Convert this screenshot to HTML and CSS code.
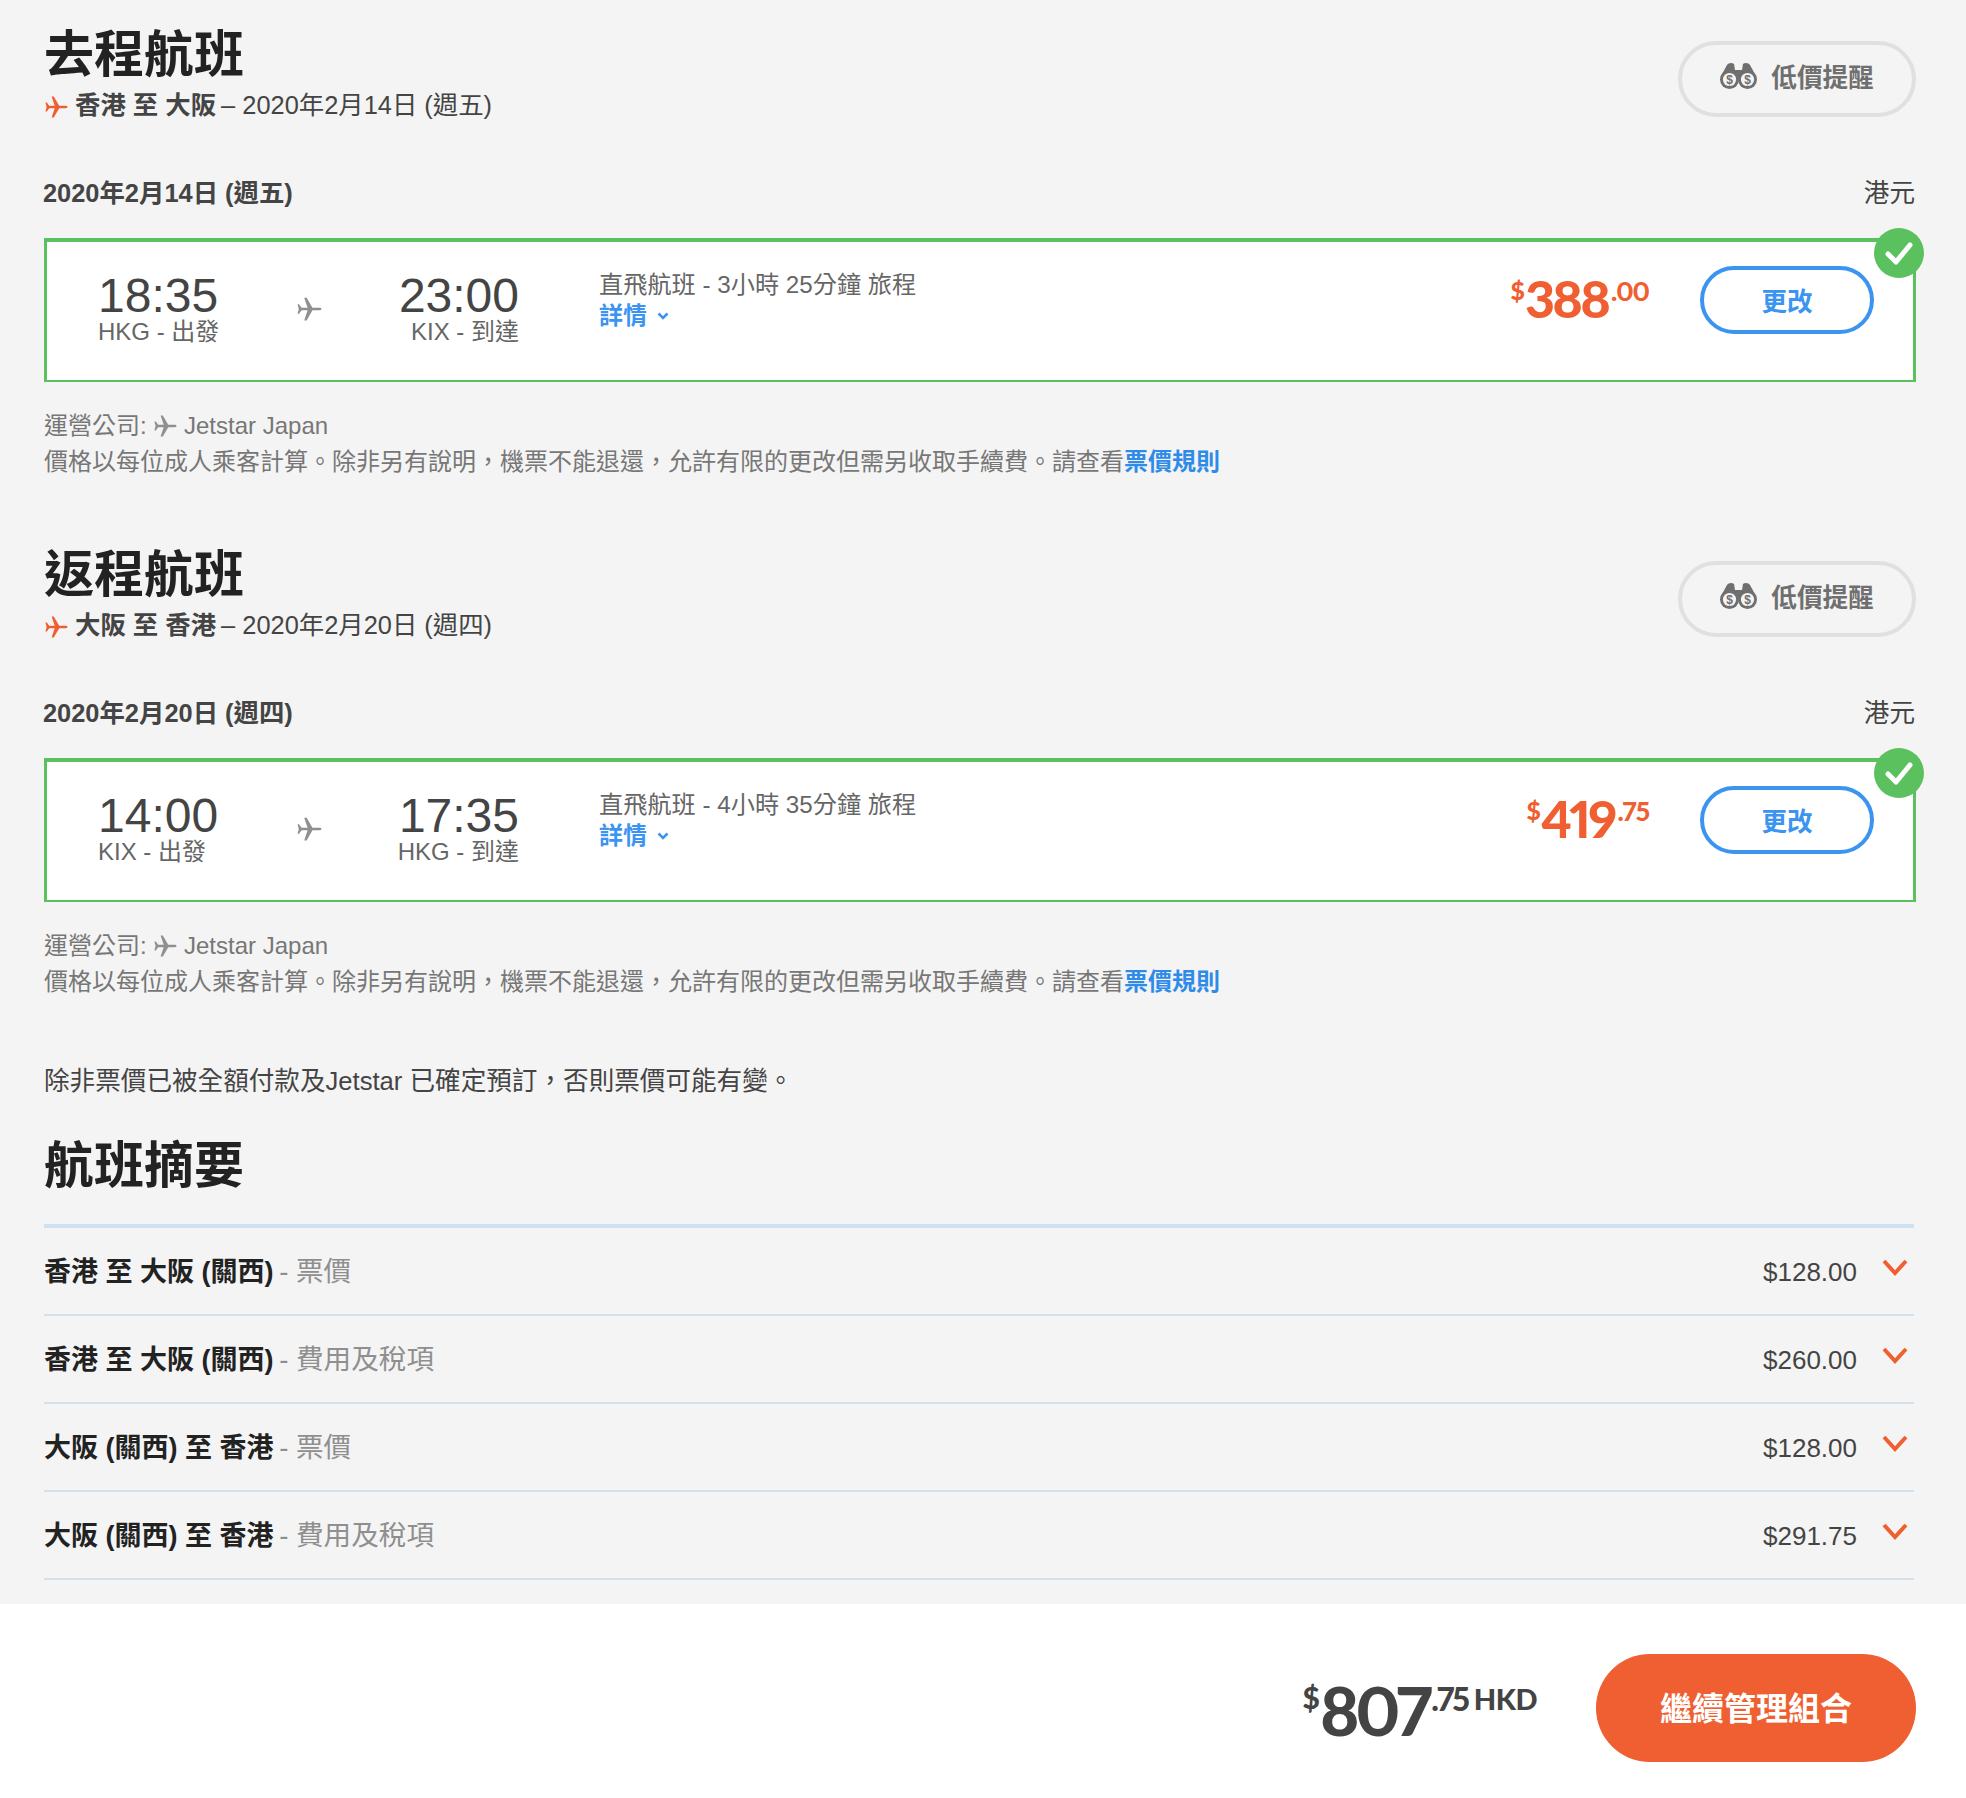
FILE: index.html
```html
<!DOCTYPE html>
<html lang="zh-Hant">
<head>
<meta charset="utf-8">
<title>航班摘要</title>
<link rel="stylesheet" href="styles.css">
</head>
<body>
<svg class="defs" width="0" height="0" aria-hidden="true">
  <symbol id="plane" viewBox="0 0 24 24"><path d="M23.5 12c0-.8-1-1.2-2-1.2h-6.3L9.8 1.5H7.6l3.1 9.3H5.2L2.8 7.6H1.4L2.6 12l-1.2 4.4h1.4l2.4-3.2h5.5L7.6 22.5h2.2l5.4-9.3h6.3c1 0 2-.4 2-1.2z"/></symbol>
  <symbol id="binoculars" viewBox="0 0 37 27">
    <path d="M1 14 7 3c1-2 5-3 7-1l1 6h7l1-6c2-2 6-1 7 1l6 11-8 4H9z"/>
    <circle cx="9.5" cy="17.5" r="9.5"/><circle cx="27.5" cy="17.5" r="9.5"/>
    <circle class="lens" cx="9.5" cy="17.5" r="6.6"/><circle class="lens" cx="27.5" cy="17.5" r="6.6"/>
  </symbol>
</svg>
<main class="page">
  <section class="leg">
    <header class="leg-head">
      <div>
        <h1 class="title">去程航班</h1>
        <p class="route"><svg class="plane plane-orange"><use href="#plane"/></svg><b>香港 至 大阪</b> – 2020年2月14日 (週五)</p>
      </div>
      <button class="alert"><svg class="binoculars" viewBox="0 0 37 27"><use href="#binoculars"/><text class="lens-sign" x="9.5" y="21.5">$</text><text class="lens-sign" x="27.5" y="21.5">$</text></svg>低價提醒</button>
    </header>
    <div class="date-row"><b>2020年2月14日 (週五)</b><span>港元</span></div>
    <article class="card">
      <div class="time time-dep"><div class="clock">18:35</div><div class="place">HKG - 出發</div></div>
      <div class="hop"><svg class="plane plane-grey"><use href="#plane"/></svg></div>
      <div class="time time-arr"><div class="clock">23:00</div><div class="place">KIX - 到達</div></div>
      <div class="info"><div>直飛航班 - 3小時 25分鐘 旅程</div><div class="details">詳情<svg class="mini-chev" viewBox="0 0 12 8"><path d="M1.5 1.5 6 6l4.5-4.5"/></svg></div></div>
      <div class="price"><span class="cur">$</span><span class="int">388</span><span class="dec">.00</span></div>
      <button class="change">更改</button>
      <span class="check"><svg viewBox="0 0 50 50"><path d="M14 26l8 8 14-17"/></svg></span>
    </article>
    <div class="notes">
      <p>運營公司: <svg class="plane plane-note"><use href="#plane"/></svg> Jetstar Japan</p>
      <p>價格以每位成人乘客計算<span class="punct">。</span>除非另有說明<span class="punct">，</span>機票不能退還<span class="punct">，</span>允許有限的更改但需另收取手續費<span class="punct">。</span>請查看<a class="link">票價規則</a></p>
    </div>
  </section>
  <section class="leg">
    <header class="leg-head">
      <div>
        <h1 class="title">返程航班</h1>
        <p class="route"><svg class="plane plane-orange"><use href="#plane"/></svg><b>大阪 至 香港</b> – 2020年2月20日 (週四)</p>
      </div>
      <button class="alert"><svg class="binoculars" viewBox="0 0 37 27"><use href="#binoculars"/><text class="lens-sign" x="9.5" y="21.5">$</text><text class="lens-sign" x="27.5" y="21.5">$</text></svg>低價提醒</button>
    </header>
    <div class="date-row"><b>2020年2月20日 (週四)</b><span>港元</span></div>
    <article class="card">
      <div class="time time-dep"><div class="clock">14:00</div><div class="place">KIX - 出發</div></div>
      <div class="hop"><svg class="plane plane-grey"><use href="#plane"/></svg></div>
      <div class="time time-arr"><div class="clock">17:35</div><div class="place">HKG - 到達</div></div>
      <div class="info"><div>直飛航班 - 4小時 35分鐘 旅程</div><div class="details">詳情<svg class="mini-chev" viewBox="0 0 12 8"><path d="M1.5 1.5 6 6l4.5-4.5"/></svg></div></div>
      <div class="price"><span class="cur">$</span><span class="int">419</span><span class="dec">.75</span></div>
      <button class="change">更改</button>
      <span class="check"><svg viewBox="0 0 50 50"><path d="M14 26l8 8 14-17"/></svg></span>
    </article>
    <div class="notes">
      <p>運營公司: <svg class="plane plane-note"><use href="#plane"/></svg> Jetstar Japan</p>
      <p>價格以每位成人乘客計算<span class="punct">。</span>除非另有說明<span class="punct">，</span>機票不能退還<span class="punct">，</span>允許有限的更改但需另收取手續費<span class="punct">。</span>請查看<a class="link">票價規則</a></p>
    </div>
  </section>
  <p class="disclaimer">除非票價已被全額付款及Jetstar 已確定預訂<span class="punct">，</span>否則票價可能有變<span class="punct">。</span></p>
  <h2 class="title summary-title">航班摘要</h2>
  <ul class="summary">
    <li class="row"><span class="row-label"><b>香港 至 大阪 (關西)</b><i> - 票價</i></span><span class="amount">$128.00</span><svg class="chev" viewBox="0 0 26 20"><path d="M2 3l11 12L24 3"/></svg></li>
    <li class="row"><span class="row-label"><b>香港 至 大阪 (關西)</b><i> - 費用及稅項</i></span><span class="amount">$260.00</span><svg class="chev" viewBox="0 0 26 20"><path d="M2 3l11 12L24 3"/></svg></li>
    <li class="row"><span class="row-label"><b>大阪 (關西) 至 香港</b><i> - 票價</i></span><span class="amount">$128.00</span><svg class="chev" viewBox="0 0 26 20"><path d="M2 3l11 12L24 3"/></svg></li>
    <li class="row"><span class="row-label"><b>大阪 (關西) 至 香港</b><i> - 費用及稅項</i></span><span class="amount">$291.75</span><svg class="chev" viewBox="0 0 26 20"><path d="M2 3l11 12L24 3"/></svg></li>
  </ul>
</main>
<footer class="footer">
  <div class="total"><span class="t-cur">$</span><span class="t-int">807</span><span class="t-dec">.75</span><span class="t-code">HKD</span></div>
  <button class="continue">繼續管理組合</button>
</footer>
</body>
</html>
```
FILE: styles.css
```css
* { box-sizing: border-box; }
html, body { margin: 0; padding: 0; }
body {
  background: #fff;
  color: #444;
  font-family: "Liberation Sans", "Noto Sans CJK TC", sans-serif;
  font-size: 24px;
}
.defs { position: absolute; }
p, h1, h2, ul { margin: 0; padding: 0; }
button { font-family: inherit; background: none; cursor: pointer; padding: 0; }
.punct { font-family: "Noto Sans CJK SC", sans-serif; line-height: 0; }

.page { background: #f4f4f4; padding: 25px 50px 24px 44px; }
.leg { margin-bottom: 65px; }
.leg-head { display: flex; justify-content: space-between; align-items: flex-start; }

.title { font-size: 50px; line-height: 60px; font-weight: 700; color: #222; }
.route { font-size: 25.4px; line-height: 36px; margin-top: 2px; display: flex; align-items: center; white-space: pre; }
.route b { font-weight: 700; margin-right: -2px; }

.plane { display: inline-block; vertical-align: middle; }
.plane-orange { width: 24px; height: 26px; fill: #ef5f31; margin: 4px 7px 0 0; }
.plane-grey { width: 26px; height: 26px; fill: #8f8f8f; }
.plane-note { width: 24px; height: 24px; fill: #8f8f8f; margin-top: -3px; }

.alert {
  width: 238px; height: 76px; margin-top: 16px; padding-bottom: 7px;
  border: 4px solid #e0e0e0; border-radius: 38px;
  color: #6f6f6f; font-size: 25.6px; font-weight: 700;
  display: flex; align-items: center; justify-content: center; gap: 14px;
}
.binoculars { width: 37px; height: 27px; fill: #6f6f6f; }
.lens { fill: #f4f4f4; }
.lens-sign { font-size: 12px; font-weight: 700; fill: #6f6f6f; text-anchor: middle; }

.date-row { display: flex; justify-content: space-between; line-height: 36px; margin-top: 52px; }
.date-row b { font-size: 25.4px; margin-left: -1px; }
.date-row span { font-size: 25.6px; margin-right: 1px; }

.card {
  position: relative; display: flex; align-items: flex-start;
  height: 144px; margin-top: 27px; padding: 24px 39px 0 51px;
  background: #fff;
  border: solid #5bc15e; border-width: 4px 3px 2px 3px;
}
.time { width: 125px; margin-top: 6px; }
.clock { font-size: 48px; line-height: 47px; }
.place { font-size: 24px; line-height: 24px; margin-top: 1px; color: #666; }
.hop { width: 175px; padding: 27px 0 0 73px; height: 60px; }
.time-arr { width: 122px; margin-left: -1px; text-align: right; }
.info { margin-left: 80px; font-size: 24.2px; line-height: 30px; color: #666; padding-top: 4px; }
.details { color: #3b94f0; font-size: 24px; font-weight: 700; display: flex; align-items: center; gap: 10px; margin-top: 1px; }
.mini-chev { width: 12px; height: 8px; fill: none; stroke: #3b94f0; stroke-width: 2.5; }

.price { margin-left: auto; margin-top: 1px; display: flex; align-items: flex-start; color: #ef5f31; font-family: Lato, "Open Sans", sans-serif; font-weight: 900; font-variant-numeric: proportional-nums; }
.cur { font-size: 25px; line-height: 32px; margin-top: 7px; margin-right: 0; }
.int { font-size: 52px; line-height: 62px; letter-spacing: -2.8px; }
.dec { font-size: 26px; line-height: 32px; margin-top: 8px; margin-left: 3px; letter-spacing: -1px; }

.change {
  width: 174px; height: 68px; margin-left: 51px; padding-bottom: 2px;
  border: 4px solid #3b94f0; border-radius: 34px; background: #fff;
  color: #3b94f0; font-size: 25.6px; font-weight: 700;
}
.check {
  position: absolute; top: -14px; right: -11px;
  width: 50px; height: 50px; border-radius: 50%; background: #5bc15e;
}
.check svg { display: block; fill: none; stroke: #fff; stroke-width: 5; stroke-linecap: round; stroke-linejoin: round; }

.notes { margin-top: 26px; line-height: 36px; color: #777; }
.link { color: #2f8be8; font-weight: 700; }

.disclaimer { margin-top: -2px; font-size: 25.6px; line-height: 36px; color: #444; }
.summary-title { margin-top: 37px; }
.summary { list-style: none; margin-top: 28px; border-top: 4px solid #cfe0ee; width: 1870px; }
.row {
  display: flex; align-items: center; height: 88px;
  border-bottom: 2px solid #d4e2ee;
}
.row-label { font-size: 27.6px; padding-bottom: 4px; }
.row b { color: #222; font-size: 27px; margin-right: -2px; }
.row i { font-style: normal; color: #8f8f8f; }
.amount { margin-left: auto; font-size: 26px; color: #444; padding-top: 2px; }
.chev { width: 26px; height: 20px; margin: -6px 6px 0 25px; fill: none; stroke: #ef5f31; stroke-width: 4; }

.footer { display: flex; justify-content: flex-end; align-items: flex-start; gap: 59px; height: 194px; padding: 50px 50px 0 0; background: #fff; }
.total { display: flex; align-items: flex-start; color: #444; font-family: Lato, "Open Sans", sans-serif; font-weight: 900; font-variant-numeric: proportional-nums; padding-top: 18px; }
.t-cur { font-size: 30px; line-height: 40px; margin-top: 5px; margin-right: 0; }
.t-int { font-size: 67px; line-height: 76px; letter-spacing: -4px; }
.t-dec { font-size: 32px; line-height: 40px; letter-spacing: -2px; margin-top: 7px; margin-left: 3px; }
.t-code { font-size: 29px; line-height: 40px; margin-top: 7px; margin-left: 6px; letter-spacing: -.5px; }
.continue {
  width: 320px; height: 108px; padding-bottom: 4px; border: 0; border-radius: 54px;
  background: #ef5f31; color: #fff; font-size: 32px; font-weight: 700;
}
```
